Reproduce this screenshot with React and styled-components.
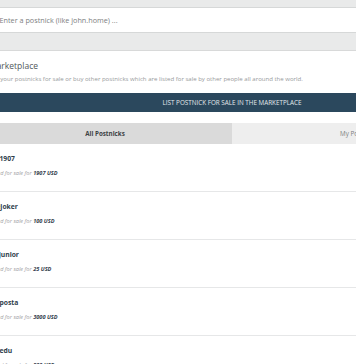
import React from "react";
import styled, { createGlobalStyle } from "styled-components";

const GlobalStyle = createGlobalStyle`
  html, body {
    margin: 0;
    padding: 0;
    background: #ffffff;
    overflow: hidden;
    font-family: "Open Sans", "Liberation Sans", sans-serif;
  }
`;

const Page = styled.div`
  width: 508px;
  margin-left: -22px;
`;

const SearchBar = styled.div`
  background: #e9eaea;
  padding: 7px 0 17px;
  border-bottom: 1px solid #d8d9d9;
`;

const SearchInput = styled.input`
  display: block;
  box-sizing: border-box;
  width: 100%;
  height: 26px;
  border: 1px solid #d6d8d8;
  background: #ffffff;
  padding: 0 0 0 20.5px;
  font-family: "Open Sans", "Liberation Sans", sans-serif;
  font-size: 7.25px;
  color: #555;
  outline: none;

  &::placeholder {
    color: #7c7e80;
  }
`;

const Market = styled.section`
  padding: 10px 11px 0;
`;

const Heading = styled.h2`
  margin: 0;
  font-size: 8.5px;
  line-height: 10px;
  font-weight: 400;
  color: #50575b;
`;

const Description = styled.p`
  margin: 4px 0 0;
  font-size: 6.05px;
  line-height: 8px;
  color: #979a9c;
`;

const ListButton = styled.button`
  display: block;
  width: 100%;
  height: 19px;
  margin-top: 10px;
  border: none;
  background: #2b485d;
  color: #e3e8ec;
  font-family: "Open Sans", "Liberation Sans", sans-serif;
  font-size: 6.3px;
  text-transform: uppercase;
  cursor: pointer;
`;

const Tabs = styled.div`
  display: grid;
  grid-template-columns: 1fr 1fr;
  margin-top: 11px;
  height: 21px;
`;

const Tab = styled.div`
  display: flex;
  align-items: center;
  justify-content: center;
  background: ${(p) => (p.$active ? "#dadada" : "#eeeeee")};
  color: ${(p) => (p.$active ? "#3d4245" : "#7a7d80")};
  font-size: 6.25px;
  font-weight: ${(p) => (p.$active ? 700 : 400)};
`;

const List = styled.ul`
  list-style: none;
  margin: 0;
  padding: 0;
`;

const Item = styled.li`
  padding: 10px 11px 14px;
  border-bottom: 1px solid #e6e7e8;
`;

const Name = styled.div`
  font-size: 6.75px;
  line-height: 9px;
  font-weight: 700;
  color: #2f3e4c;
`;

const Price = styled.div`
  margin-top: 7px;
  font-size: 5.6px;
  line-height: 7px;
  font-style: italic;
  color: #9fa2a5;

  b {
    font-weight: 700;
    color: #34414e;
  }
`;

const postnicks = [
  { name: "my1907", price: "1907 USD" },
  { name: "thejoker", price: "100 USD" },
  { name: "mrjunior", price: "25 USD" },
  { name: "myposta", price: "3000 USD" },
  { name: "myedu", price: "500 USD" },
];

export default function App() {
  return (
    <>
      <GlobalStyle />
      <Page>
        <SearchBar>
          <SearchInput placeholder="Enter a postnick (like john.home) ..." />
        </SearchBar>
        <Market>
          <Heading>Marketplace</Heading>
          <Description>
            List your postnicks for sale or buy other postnicks which are listed
            for sale by other people all around the world.
          </Description>
          <ListButton>List postnick for sale in the marketplace</ListButton>
        </Market>
        <Tabs>
          <Tab $active>All Postnicks</Tab>
          <Tab>My Postnicks</Tab>
        </Tabs>
        <List>
          {postnicks.map((p) => (
            <Item key={p.name}>
              <Name>{p.name}</Name>
              <Price>
                Listed for sale for <b>{p.price}</b>
              </Price>
            </Item>
          ))}
        </List>
      </Page>
    </>
  );
}
